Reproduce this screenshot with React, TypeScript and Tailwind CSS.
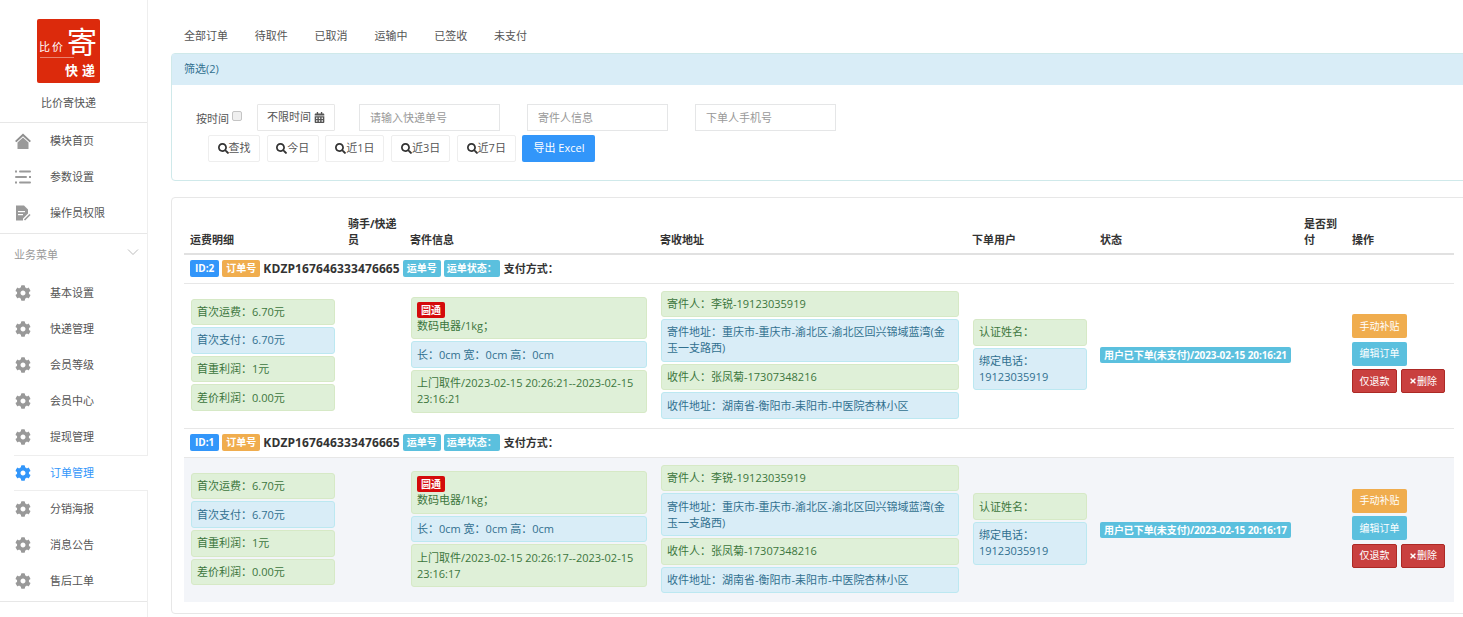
import React from "react";
import { FaCalendarAlt, FaCog, FaSearch, FaTimes } from "react-icons/fa";

const topMenu = ["模块首页", "参数设置", "操作员权限"];
const bizMenu = ["基本设置", "快递管理", "会员等级", "会员中心", "提现管理", "订单管理", "分销海报", "消息公告", "售后工单"];
const tabs = ["全部订单", "待取件", "已取消", "运输中", "已签收", "未支付"];
const quick = ["查找", "今日", "近1日", "近3日", "近7日"];

function HomeIcon() {
  return (
    <svg viewBox="0 0 16 16" className="w-4 h-4">
      <path d="M8 0.5 L16 8 L14.6 9.2 L8 3.2 L1.4 9.2 L0 8 Z" fill="#8f8f8f" />
      <path d="M8 4.6 L13.5 9.6 V16 H2.5 V9.6 Z" fill="#9a9a9a" />
    </svg>
  );
}

function ListIcon() {
  return (
    <svg viewBox="0 0 16 16" className="w-4 h-4" fill="#9a9a9a">
      <rect x="0" y="1.5" width="2" height="2" />
      <rect x="4" y="1.5" width="12" height="2" rx="1" />
      <rect x="0" y="7" width="12" height="2" rx="1" />
      <rect x="14" y="7" width="2" height="2" />
      <rect x="0" y="12.5" width="2" height="2" />
      <rect x="4" y="12.5" width="12" height="2" rx="1" />
    </svg>
  );
}

function DocIcon() {
  return (
    <svg viewBox="0 0 16 16" className="w-4 h-4">
      <path d="M1 0.5 H9 L13 4.5 V8.5 L8 13.5 V15.5 H1 Z" fill="#9a9a9a" />
      <rect x="3" y="6" width="7" height="1.2" fill="#fff" />
      <rect x="3" y="9" width="5" height="1.2" fill="#fff" />
      <path d="M9.5 15 L15 9.5" stroke="#9a9a9a" strokeWidth="1.6" />
    </svg>
  );
}

function Logo() {
  return (
    <svg viewBox="0 0 63 64" className="w-[63px] h-16 block">
      <rect width="63" height="64" rx="2" fill="#dc2a0c" />
      <g fill="#fff" fontFamily="'Noto Sans CJK SC', sans-serif">
        <text x="2" y="32" fontSize="11" letterSpacing="2">比价</text>
        <text x="30" y="34" fontSize="30">寄</text>
        <text x="28" y="56" fontSize="13" letterSpacing="4" fontWeight="700">快递</text>
      </g>
      <rect x="3" y="38" width="34" height="0.6" fill="#fff" opacity="0.7" />
    </svg>
  );
}

function Sidebar() {
  return (
    <aside className="w-[148px] shrink-0 border-r border-[#eeeeee] min-h-[617px]">
      <div className="h-[123px] border-b border-[#e7e7e7] pt-[19px] flex flex-col items-center pr-[10px]">
        <Logo />
        <div className="mt-[12px] text-[11px] leading-[16px] text-[#555]">比价寄快递</div>
      </div>
      <div className="h-[111px] border-b border-[#e7e7e7]">
        {topMenu.map((m, i) => (
          <div key={m} className="h-[36px] flex items-center pl-[15px] text-[11px] text-[#555]">
            <span className="w-[35px] shrink-0">
              {i === 0 ? <HomeIcon /> : i === 1 ? <ListIcon /> : <DocIcon />}
            </span>
            {m}
          </div>
        ))}
      </div>
      <div className="h-[41px] flex items-center justify-between pl-[14px] pr-[8px] pt-[1px] text-[11px] text-[#999]">
        <span>业务菜单</span>
        <svg viewBox="0 0 12 12" className="w-3 h-3 -mt-[6px]" fill="none" stroke="#aaa" strokeWidth="0.8">
          <path d="M1 3.5 L6 8.5 L11 3.5" />
        </svg>
      </div>
      <div className="pb-[2px] border-b border-[#e7e7e7]">
        {bizMenu.map((m) => {
          const active = m === "订单管理";
          return (
            <div
              key={m}
              className={
                active
                  ? "relative h-[36px] -mr-px ml-[14px] flex items-center bg-white text-[11px] text-[#3296fa] border-y border-[#eeeeee]"
                  : "h-[36px] flex items-center pl-[15px] text-[11px] text-[#555]"
              }
            >
              <span className={active ? "w-[36px] shrink-0 pl-px" : "w-[35px] shrink-0"}>
                <FaCog className={active ? "w-4 h-4 text-[#3296fa]" : "w-4 h-4 text-[#999]"} />
              </span>
              {m}
            </div>
          );
        })}
      </div>
    </aside>
  );
}

function Alert({ tone, children }: { tone: "green" | "blue"; children: React.ReactNode }) {
  return (
    <div
      className={
        tone === "green"
          ? "mb-[2px] rounded-[3px] border border-[#d6e9c6] bg-[#dff0d8] text-[#3c763d] px-[5px] py-[4.3px] text-[11px] leading-[16px]"
          : "mb-[2px] rounded-[3px] border border-[#bce8f1] bg-[#d9edf7] text-[#31708f] px-[5px] py-[4.3px] text-[11px] leading-[16px]"
      }
    >
      {children}
    </div>
  );
}

function Tag({ color, children }: { color: string; children: React.ReactNode }) {
  return (
    <span className={`inline-block rounded-[2px] px-[4px] text-[10px] leading-[17px] font-bold text-white ${color}`}>
      {children}
    </span>
  );
}

function OrderRows({ id, time, striped }: { id: number; time: string; striped?: boolean }) {
  const pickup = `上门取件/2023-02-15 20:26:${time}--2023-02-15 23:16:${time}`;
  const placed = `用户已下单(未支付)/2023-02-15 20:16:${time}`;
  return (
    <>
      <tr className="border-b border-[#e7e7e7]">
        <td colSpan={8} className="h-[29px] px-[6px] align-middle">
          <div className="flex items-center gap-[3px] whitespace-nowrap">
            <span className="inline-block rounded-[2px] px-[5px] text-[10px] leading-[17px] font-bold text-white bg-[#3296fa]">{`ID:${id}`}</span>
            <Tag color="bg-[#f0ad4e]">订单号</Tag>
            <span className="text-[12px] font-bold text-[#333] tracking-[0.12px]">KDZP167646333476665</span>
            <Tag color="bg-[#5bc0de]">运单号</Tag>
            <span className="inline-block rounded-[2px] px-[3px] text-[10px] leading-[17px] font-bold text-white bg-[#5bc0de]">运单状态：</span>
            <span className="ml-[1px] text-[11px] font-bold text-[#333]">支付方式：</span>
          </div>
        </td>
      </tr>
      <tr className={striped ? "bg-[#f3f5f9]" : "border-b border-[#e7e7e7]"}>
        <td className="px-[7px] align-middle">
          <Alert tone="green">首次运费：6.70元</Alert>
          <Alert tone="blue">首次支付：6.70元</Alert>
          <Alert tone="green">首重利润：1元</Alert>
          <Alert tone="green">差价利润：0.00元</Alert>
        </td>
        <td />
        <td className="px-[7px] align-middle">
          <Alert tone="green">
            <span className="block w-fit rounded-[2px] bg-[#d40b0b] px-[4px] text-[10px] leading-[16px] font-bold text-white">圆通</span>
            <span className="block">数码电器/1kg；</span>
          </Alert>
          <Alert tone="blue">长：0cm 宽：0cm 高：0cm</Alert>
          <Alert tone="green">{pickup}</Alert>
        </td>
        <td className="px-[7px] py-[7px] align-middle">
          <Alert tone="green">寄件人：李锐-19123035919</Alert>
          <Alert tone="blue">寄件地址：重庆市-重庆市-渝北区-渝北区回兴锦域蓝湾(金玉一支路西)</Alert>
          <Alert tone="green">收件人：张凤菊-17307348216</Alert>
          <Alert tone="blue">收件地址：湖南省-衡阳市-耒阳市-中医院杏林小区</Alert>
        </td>
        <td className="px-[7px] align-middle">
          <Alert tone="green">认证姓名：</Alert>
          <Alert tone="blue">绑定电话：19123035919</Alert>
        </td>
        <td className="px-[6px] align-middle">
          <span className="inline-block whitespace-nowrap rounded-[2px] bg-[#5bc0de] px-[4px] text-[10px] leading-[16px] font-bold text-white tracking-[-0.09px]">
            {placed}
          </span>
        </td>
        <td />
        <td className="px-[6px] pb-[4px] align-middle">
          <div className="flex flex-col items-start gap-[3.5px]">
            <button className="h-[24px] w-[55px] rounded-[2px] bg-[#f0ad4e] text-[10px] text-white">手动补贴</button>
            <button className="h-[24px] w-[55px] rounded-[2px] bg-[#5bc0de] text-[10px] text-white">编辑订单</button>
            <div className="flex gap-[4px]">
              <button className="h-[24px] w-[45px] rounded-[2px] bg-[#c9403f] border border-[#ac2925] text-[10px] text-white">仅退款</button>
              <button className="h-[24px] w-[44px] rounded-[2px] bg-[#c9403f] border border-[#ac2925] text-[10px] text-white inline-flex items-center justify-center">
                <FaTimes className="w-[8px] h-[8px]" />删除
              </button>
            </div>
          </div>
        </td>
      </tr>
    </>
  );
}

export default function App() {
  return (
    <div className="flex h-[617px] w-[1463px] overflow-hidden bg-white font-['Open_Sans','Noto_Sans_CJK_SC',sans-serif]">
      <Sidebar />
      <main className="pl-[23px] min-w-0 flex-1">
        <nav className="h-[53px] flex items-start pt-[28px] pl-[13px] gap-[26.8px] text-[11px] leading-[16px] text-[#555]">
          {tabs.map((t) => (
            <span key={t}>{t}</span>
          ))}
        </nav>

        <section className="w-[1300px] h-[128px] rounded-[4px] border border-[#cfe9ea]">
          <div className="h-[31px] bg-[#d9edf7] flex items-center pl-[12px] text-[11px] text-[#31708f]">筛选(2)</div>
          <div className="pl-[24px] pt-[19px]">
            <div className="flex items-center h-[27px] text-[11px]">
              <span className="text-[#555] mt-[4px]">按时间</span>
              <input type="checkbox" className="ml-[3px] mt-[-3px] w-[10px] h-[10px] appearance-none rounded-[2px] border border-[#c4c4c4] bg-[#efefef]" />
              <span className="ml-[15px] w-[78px] h-[27px] border border-[#e7e7e7] rounded-[1px] flex items-center justify-center gap-[3px] text-[#555]">
                不限时间 <FaCalendarAlt className="w-[11px] h-[11px]" />
              </span>
              <input readOnly placeholder="请输入快递单号" className="ml-[24px] w-[141px] h-[27px] border border-[#e5e6e7] px-[10px] placeholder:text-[#999] outline-none" />
              <input readOnly placeholder="寄件人信息" className="ml-[27px] w-[141px] h-[27px] border border-[#e5e6e7] px-[10px] placeholder:text-[#999] outline-none" />
              <input readOnly placeholder="下单人手机号" className="ml-[27px] w-[141px] h-[27px] border border-[#e5e6e7] px-[10px] placeholder:text-[#999] outline-none" />
            </div>
            <div className="flex items-center gap-[6.7px] mt-[4px] ml-[12px]">
              {quick.map((q) => (
                <button key={q} className={`h-[27px] ${q === "查找" || q === "今日" ? "w-[52px]" : "w-[59px]"} border border-[#eeeeee] rounded-[2px] text-[11px] text-[#555] inline-flex items-center justify-center`}>
                  <FaSearch className="w-[11px] h-[11px] text-[#333]" />
                  {q}
                </button>
              ))}
              <button className="h-[27px] w-[73px] rounded-[2px] bg-[#3296fa] text-[11px] text-white">导出 Excel</button>
            </div>
          </div>
        </section>

        <section className="w-[1300px] h-[417px] mt-[16px] rounded-[4px] border border-[#e7e7e7] pl-[12px] pt-[18px]">
          <table className="w-[1270px] table-fixed border-collapse text-[11px]">
            <colgroup>
              <col className="w-[158px]" />
              <col className="w-[62px]" />
              <col className="w-[250px]" />
              <col className="w-[312px]" />
              <col className="w-[128px]" />
              <col className="w-[204px]" />
              <col className="w-[48px]" />
              <col className="w-[108px]" />
            </colgroup>
            <thead>
              <tr className="border-b-2 border-[#e1e1e1] text-left align-bottom text-[#333] leading-[15.5px]">
                <th className="px-[6px] pb-[6px] font-bold">运费明细</th>
                <th className="px-[6px] pb-[6px] font-bold">骑手/快递员</th>
                <th className="px-[6px] pb-[6px] font-bold">寄件信息</th>
                <th className="px-[6px] pb-[6px] font-bold">寄收地址</th>
                <th className="px-[6px] pb-[6px] font-bold">下单用户</th>
                <th className="px-[6px] pb-[6px] font-bold">状态</th>
                <th className="px-[6px] pb-[6px] font-bold">是否到付</th>
                <th className="px-[6px] pb-[6px] font-bold">操作</th>
              </tr>
            </thead>
            <tbody>
              <OrderRows id={2} time="21" />
              <OrderRows id={1} time="17" striped />
            </tbody>
          </table>
        </section>
      </main>
    </div>
  );
}
